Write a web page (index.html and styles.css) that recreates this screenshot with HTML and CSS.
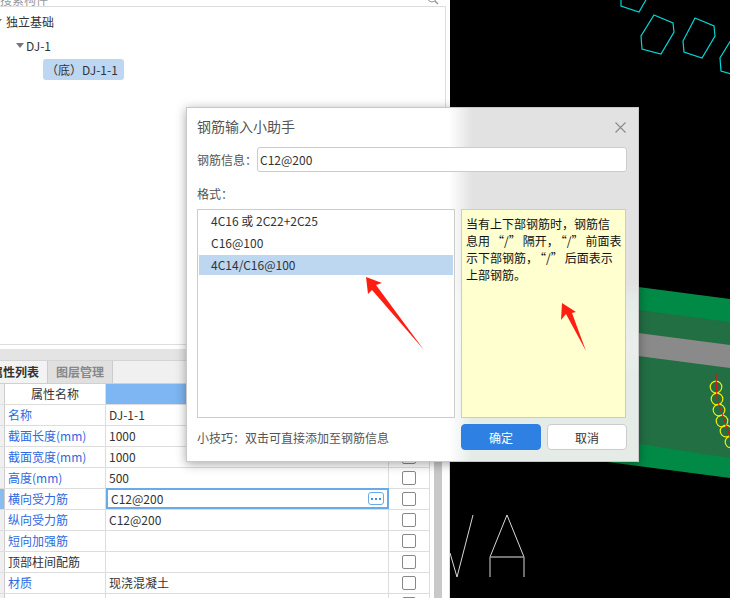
FILE: index.html
```html
<!DOCTYPE html>
<html lang="zh-CN">
<head>
  <meta charset="UTF-8"/>
  <title>钢筋输入小助手</title>
  <link rel="stylesheet" href="styles.css">
</head>
<body>

<div class="app">
  <div class="side">
    <div class="search">
      <span class="search-text">搜索构件</span>
      <svg class="search-icon" width="12" height="12" viewBox="0 0 12 12"><circle cx="5" cy="4" r="4" fill="none" stroke="#999"/><path d="M8 7l3 3" stroke="#999" stroke-width="1.5"/></svg>
    </div>

    <div class="tree">
      <div class="node node-root"><span class="caret"></span>独立基础</div>
      <div class="node node-child"><span class="caret"></span>DJ-1</div>
      <div class="node node-leaf"><span class="leaf-label">（底）DJ-1-1</span></div>
    </div>

    <div class="band"></div>

    <div class="tabs">
      <div class="tab tab-active"><span>属性列表</span></div>
      <div class="tab">图层管理</div>
    </div>

    <div class="props">
      <div class="grid">
        <div class="row row-head">
          <div class="c-mark"></div>
          <div class="c-name c-title">属性名称</div>
          <div class="c-value c-title-blue"></div>
          <div class="c-check c-title-blue"></div>
        </div>
        <div class="row">
          <div class="c-mark"></div>
          <div class="c-name link">名称</div>
          <div class="c-value">DJ-1-1</div>
          <div class="c-check"><span class="box"></span></div>
        </div>
        <div class="row">
          <div class="c-mark"></div>
          <div class="c-name link">截面长度(mm)</div>
          <div class="c-value">1000</div>
          <div class="c-check"><span class="box"></span></div>
        </div>
        <div class="row">
          <div class="c-mark"></div>
          <div class="c-name link">截面宽度(mm)</div>
          <div class="c-value">1000</div>
          <div class="c-check"><span class="box"></span></div>
        </div>
        <div class="row">
          <div class="c-mark"></div>
          <div class="c-name link">高度(mm)</div>
          <div class="c-value">500</div>
          <div class="c-check"><span class="box"></span></div>
        </div>
        <div class="row row-current">
          <div class="c-mark"></div>
          <div class="c-name link">横向受力筋</div>
          <div class="c-value c-edit">C12@200<span class="more"><i></i><i></i><i></i></span></div>
          <div class="c-check"><span class="box"></span></div>
        </div>
        <div class="row">
          <div class="c-mark"></div>
          <div class="c-name link">纵向受力筋</div>
          <div class="c-value">C12@200</div>
          <div class="c-check"><span class="box"></span></div>
        </div>
        <div class="row">
          <div class="c-mark"></div>
          <div class="c-name link">短向加强筋</div>
          <div class="c-value"></div>
          <div class="c-check"><span class="box"></span></div>
        </div>
        <div class="row">
          <div class="c-mark"></div>
          <div class="c-name">顶部柱间配筋</div>
          <div class="c-value"></div>
          <div class="c-check"><span class="box"></span></div>
        </div>
        <div class="row">
          <div class="c-mark"></div>
          <div class="c-name link">材质</div>
          <div class="c-value">现浇混凝土</div>
          <div class="c-check"><span class="box"></span></div>
        </div>
        <div class="row">
          <div class="c-mark"></div>
          <div class="c-name"></div>
          <div class="c-value"></div>
          <div class="c-check"><span class="box"></span></div>
        </div>
      </div>
      <div class="scroll"><div class="thumb"></div></div>
    </div>
  </div>

  <div class="canvas">
    <svg class="drawing" width="280" height="598" viewBox="450 0 280 598">
      <!-- slab -->
      <polygon points="600,282 730,299 730,478 600,461" fill="#008a46"/>
      <polygon points="600,305 730,322 730,458 600,438" fill="#226f44"/>
      <polygon points="600,328 730,345 730,368 600,351" fill="#8a8a8a"/>
      <!-- rebar -->
      <g fill="none" stroke="#f0f000" stroke-width="1.2">
        <circle cx="716" cy="387" r="5.8"/>
        <circle cx="717" cy="399" r="5.8"/>
        <circle cx="719" cy="410" r="5.8"/>
        <circle cx="722" cy="421" r="5.8"/>
        <circle cx="726" cy="431" r="5.8"/>
        <circle cx="731" cy="442" r="5.8"/>
      </g>
      <path d="M716 374L717 399L730 437" fill="none" stroke="#e01010" stroke-width="1"/>
      <!-- columns -->
      <g fill="none" stroke="#00d8d8" stroke-width="1.2">
        <polygon points="621,-2 621,6 639,12 647,-2"/>
        <polygon points="654,15 673,23 674,32 661,54 642,49 641,36"/>
        <polygon points="695,18 714,26 715,36 702,58 684,52 683,41"/>
        <polygon points="731,40 720,58 721,71 731,74"/>
      </g>
      <!-- axis letters -->
      <g fill="none" stroke="#d8d8d8" stroke-width="1">
        <path d="M450 553L457 577L473 515"/>
        <path d="M490 577V557L507 515L524 557V577"/>
        <path d="M490 557H524" stroke="#999" stroke-width="1.5"/>
      </g>
    </svg>
  </div>
</div>

<div class="dialog">
  <div class="dialog-title">
    <span class="dialog-name">钢筋输入小助手</span>
    <svg width="11" height="11" viewBox="0 0 11 11"><path d="M.5.5l10 10M10.5.5l-10 10" stroke="#8a8a8a" stroke-width="1.1"/></svg>
  </div>
  <div class="field">
    <label class="field-label">钢筋信息：</label>
    <div class="input">C12@200</div>
  </div>
  <div class="format-label">格式：</div>
  <div class="panes">
    <div class="list">
      <div class="item">4C16 或 2C22+2C25</div>
      <div class="item">C16@100</div>
      <div class="item item-on">4C14/C16@100</div>
    </div>
    <div class="hint">当有上下部钢筋时，钢筋信<br>息用<span class="q">“/”</span>隔开，<span class="q">“/”</span>前面表<br>示下部钢筋，<span class="q">“/”</span>后面表示<br>上部钢筋。</div>
  </div>
  <div class="dialog-foot">
    <span class="tip">小技巧：双击可直接添加至钢筋信息</span>
    <div class="buttons">
      <button class="btn btn-ok">确定</button>
      <button class="btn">取消</button>
    </div>
  </div>
</div>

<svg class="arrows" width="730" height="598" viewBox="0 0 730 598">
  <polygon points="366,277 382,283 376,285 424,350 372,290 368,294" fill="#ff1f12"/>
  <polygon points="562,303 576,312 572,313 586,351 566,314 561,320" fill="#ff1f12"/>
</svg>

</body>
</html>
```

FILE: styles.css
```css
* {
  margin: 0; padding: 0; box-sizing: border-box;
  font-family: "Noto Sans CJK SC", sans-serif;
}
body {
  width: 730px;
  height: 598px;
  overflow: hidden;
  background: #000;
  color: #333;
  font-size: 12px;
}
.app {
  display: flex;
  height: 598px;
}

/* left side */
.side {
  width: 450px;
  height: 598px;
  background: #fff;
  display: flex;
  flex-direction: column;
  overflow: hidden;
}
.search {
  flex: none;
  height: 7px;
  width: 446px;
  padding-right: 7px;
  border-bottom: 1px solid #ddd;
  display: flex;
  align-items: flex-end;
  justify-content: space-between;
  overflow: hidden;
}
.search-text {
  flex: none;
  line-height: 12px;
  color: #999;
}
.search-icon {
  flex: none;
}
.tree {
  flex: none;
  width: 446px;
  height: 338px;
  border-right: 1px solid #ddd;
  border-bottom: 1px solid #ddd;
  padding-top: 2px;
}
.node {
  height: 24px;
  display: flex;
  align-items: center;
  white-space: nowrap;
}
.node-root { padding-left: 6px; }
.node-child { padding-left: 26px; }
.node-leaf { padding-left: 43px; height: 23px; margin-top: 1px; }
.caret {
  width: 0;
  height: 0;
  border: 4px solid transparent;
  border-top: 5px solid #777;
  border-bottom: 0;
  margin-left: -10px;
  margin-right: 2px;
}
.node-root .caret { margin-left: -12px; margin-right: 4px; }
.leaf-label {
  background: #bdd7f2;
  border-radius: 3px;
  width: 81px;
  height: 21px;
  line-height: 21px;
  padding-left: 3px;
}
.band {
  flex: none;
  height: 12px;
  margin-top: 4px;
  background: #e4e4e4;
  border-bottom: 1px solid #d4d4d4;
}
.tabs {
  flex: none;
  height: 23px;
  display: flex;
  background: #f0f0f0;
  border-bottom: 1px solid #d0d0d0;
}
.tab {
  width: 65px;
  line-height: 22px;
  background: #e0e0e0;
  border-right: 1px solid #ccc;
  color: #888;
  font-weight: bold;
  text-align: center;
}
.tab-active {
  width: 48px;
  background: #f3f3f3;
  color: #333;
  text-align: left;
  overflow: hidden;
}
.tab-active span {
  display: block;
  width: 60px;
  margin-left: -9px;
}

/* property table */
.props {
  display: flex;
  flex: 1;
  min-height: 0;
}
.grid {
  width: 430px;
}
.row {
  display: flex;
  height: 21px;
  border-bottom: 1px solid #ddd;
  line-height: 20px;
}
.c-mark {
  width: 5px;
  background: #f0f0f0;
  border-right: 1px solid #ccc;
}
.row-current .c-mark {
  background: #8abcf0;
}
.c-name {
  width: 101px;
  padding-left: 3px;
  border-right: 1px solid #ddd;
  white-space: nowrap;
}
.c-title {
  text-align: center;
  padding-left: 0;
}
.link {
  color: #3068e0;
}
.c-value {
  width: 283px;
  padding-left: 3px;
  border-right: 1px solid #ddd;
  display: flex;
  align-items: center;
  justify-content: space-between;
}
.c-title-blue {
  background: #7db6f3;
}
.c-check {
  width: 41px;
  border-right: 1px solid #ddd;
  display: flex;
  align-items: center;
  justify-content: center;
}
.c-edit {
  border: 2px solid #6aaae8;
  padding: 0 3px 0 3px;
  height: 21px;
  margin-top: -1px;
  margin-bottom: -1px;
}
.more {
  width: 16px;
  height: 13px;
  border: 1px solid #6aaae8;
  border-radius: 3px;
  display: flex;
  align-items: center;
  justify-content: center;
  gap: 2px;
}
.more i {
  width: 2px;
  height: 2px;
  background: #3f8fe6;
}
.box {
  width: 14px;
  height: 14px;
  border: 1px solid #888;
  border-radius: 2px;
}
.scroll {
  width: 16px;
  margin-left: 4px;
  border-right: 1px solid #ddd;
}
.thumb {
  width: 8px;
  height: 100%;
  background: #c8c8c8;
}

/* cad view */
.canvas {
  width: 280px;
  height: 598px;
  background: #000;
}
.drawing {
  display: block;
}

/* dialog */
.dialog {
  position: absolute;
  left: 186px;
  top: 107px;
  width: 453px;
  height: 355px;
  padding: 0 11px 0 10px;
  border: 1px solid #c8c8c8;
  background:
    linear-gradient(to right, #fff 262px, rgba(255,255,255,0) 285px),
    linear-gradient(#e2e2e2 175px, #e5ece8 195px, #ebeeec 240px, #e5ece8 265px);
  box-shadow: 0 2px 10px rgba(0,0,0,0.35);
  color: #555;
}
.dialog-title {
  height: 39px;
  padding-right: 1px;
  display: flex;
  align-items: center;
  justify-content: space-between;
  font-size: 14px;
}
.dialog-name {
  margin-top: -3px;
}
.field {
  display: flex;
  align-items: center;
  height: 25px;
}
.field-label {
  width: 60px;
}
.input {
  flex: 1;
  height: 25px;
  line-height: 23px;
  padding-left: 2px;
  background: #fff;
  border: 1px solid #ccc;
  border-radius: 3px;
  color: #333;
}
.format-label {
  padding-top: 14px;
  line-height: 16px;
  height: 37px;
}
.panes {
  display: flex;
  gap: 6px;
  height: 209px;
}
.list {
  width: 258px;
  background: #fff;
  border: 1px solid #ccc;
  padding: 1px;
  display: flex;
  flex-direction: column;
  gap: 2px;
  color: #333;
}
.item {
  height: 20px;
  line-height: 20px;
  padding-left: 12px;
}
.item-on {
  background: #bdd7f0;
}
.hint {
  width: 165px;
  background: #ffffd0;
  border: 1px solid #ccc;
  padding: 5px 4px;
  line-height: 17px;
  color: #111;
  white-space: nowrap;
}
.q {
  padding: 0 2px;
}
.dialog-foot {
  display: flex;
  align-items: center;
  justify-content: space-between;
  margin-top: 6px;
}
.buttons {
  display: flex;
  gap: 6px;
}
.btn {
  width: 80px;
  height: 26px;
  background: #fff;
  border: 1px solid #ccc;
  border-radius: 4px;
  color: #333;
  font-size: 12px;
}
.btn-ok {
  background: #2e80e2;
  border-color: #2e80e2;
  color: #fff;
}
.arrows {
  position: absolute;
  left: 0;
  top: 0;
  pointer-events: none;
}
```
